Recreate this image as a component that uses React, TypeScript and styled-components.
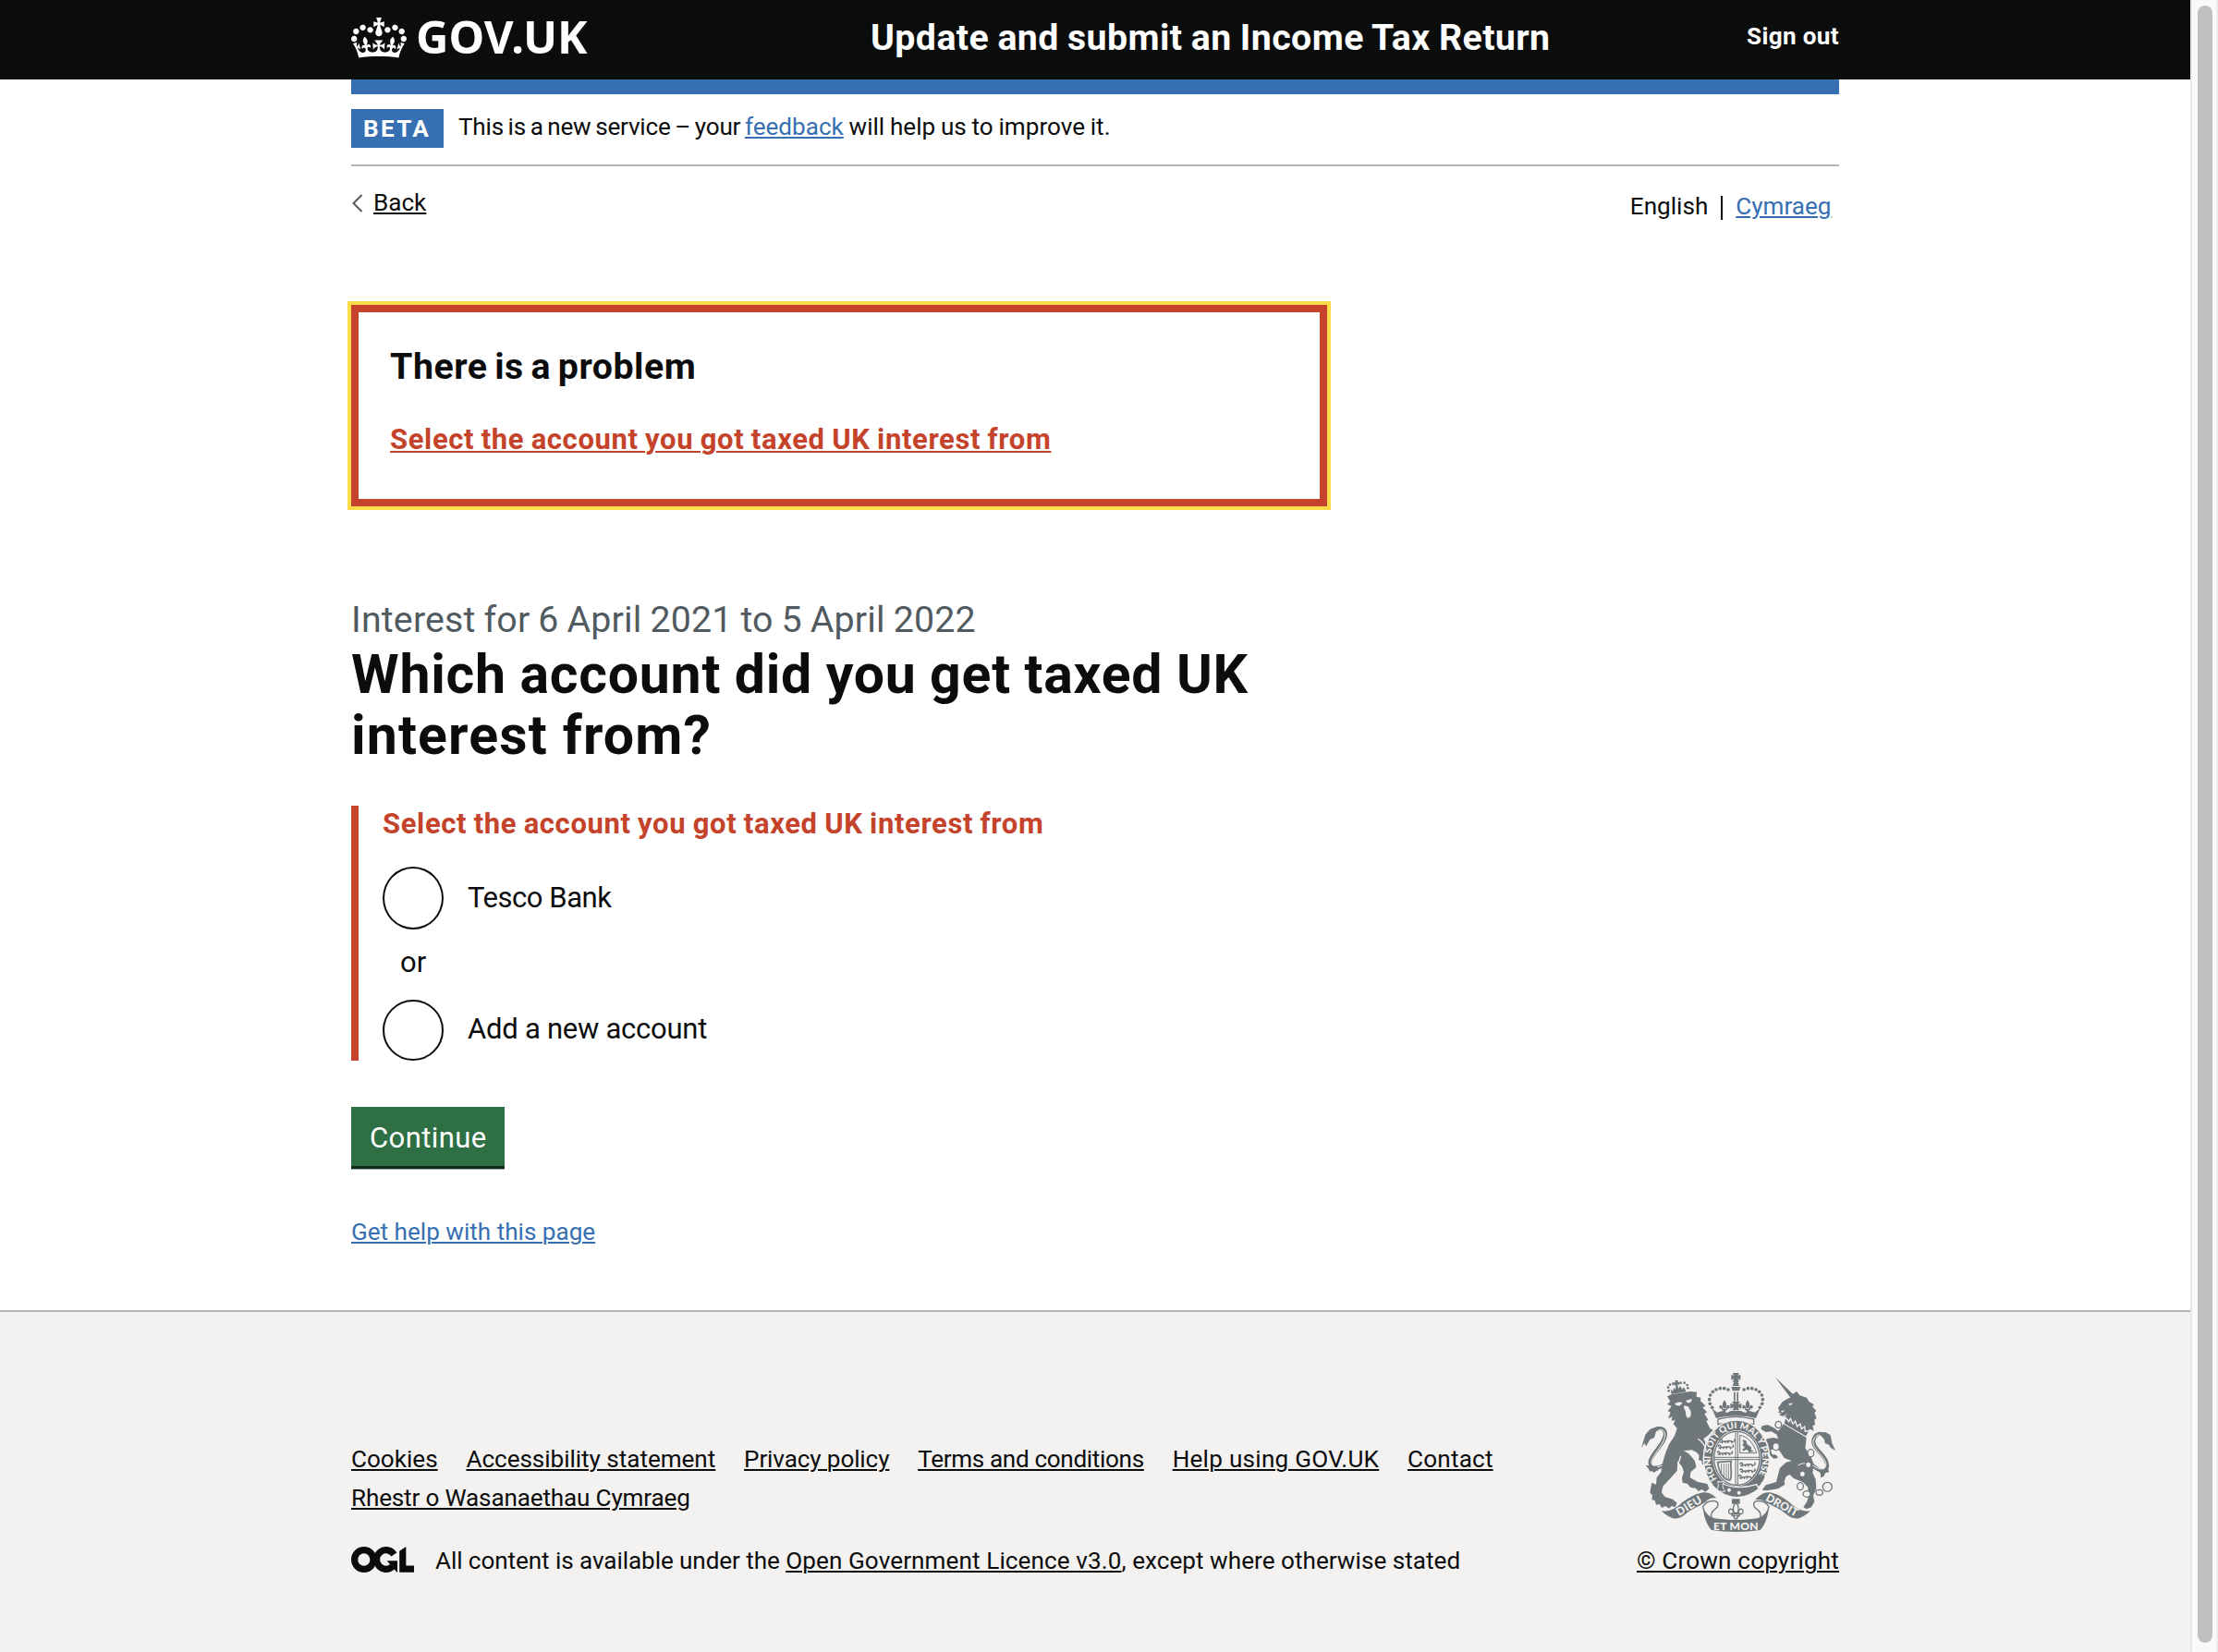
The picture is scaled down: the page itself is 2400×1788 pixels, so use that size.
import React from "react";
import styled, { createGlobalStyle } from "styled-components";

const ink = "#0b0c0c";
const blue = "#366fb2";
const red = "#c4432a";
const grey = "#b1b4b6";
const canvas = "#f3f2f1";
const crestGrey = "#6f777b";

const GlobalStyle = createGlobalStyle`
  html, body { margin: 0; padding: 0; background: #fff; }
  *, *::before, *::after { box-sizing: border-box; }
  body {
    color: ${ink};
    font-family: Roboto, "Liberation Sans", sans-serif;
    -webkit-font-smoothing: antialiased;
  }
  h1, h2, p, ul { margin: 0; padding: 0; }
`;

const Window = styled.div`
  display: flex;
  height: 1788px;
  overflow: hidden;
`;

const Page = styled.div`
  display: flex;
  flex-direction: column;
  width: 2370px;
`;

const ScrollTrack = styled.div`
  width: 30px;
  padding: 6px 4px 10px 6px;
  background: #fafafa;
  border-left: 2px solid #e8e8e8;
  border-right: 2px solid #ededed;
`;

const ScrollThumb = styled.div`
  width: 16px;
  height: 100%;
  border-radius: 8px;
  background: #c1c1c1;
`;

const Container = styled.div`
  width: 1610px;
  margin: 0 auto;
`;

const Header = styled.header`
  height: 86px;
  background: ${ink};
  color: #fff;
`;

const HeaderGrid = styled(Container)`
  display: grid;
  grid-template-columns: 562px 1fr auto;
  align-items: start;
`;

const Logo = styled.div`
  display: flex;
  align-items: flex-start;
  padding-top: 13px;
  svg { margin: 6px 10px 0 0; display: block; }
`;

const LogoText = styled.span`
  font-family: "Noto Sans", sans-serif;
  font-size: 49px;
  line-height: 52px;
  font-weight: 700;
`;

const ServiceName = styled.div`
  padding-top: 17px;
  font-size: 39.3px;
  line-height: 48px;
  font-weight: 700;
  letter-spacing: 0.42px;
  word-spacing: -1px;
  white-space: nowrap;
`;

const SignOut = styled.div`
  padding-top: 24px;
  font-size: 26.1px;
  line-height: 30px;
  font-weight: 700;
  letter-spacing: 0.35px;
`;

const BlueBar = styled(Container)`
  height: 16px;
  background: ${blue};
`;

const Text = styled.span<{ $ls?: number; $ws?: number }>`
  letter-spacing: ${p => p.$ls ?? 0}px;
  word-spacing: ${p => p.$ws ?? 0}px;
  white-space: pre;
`;

const Link = styled.a<{ $ls?: number; $ws?: number; $color?: string }>`
  color: ${p => p.$color ?? ink};
  letter-spacing: ${p => p.$ls ?? 0}px;
  word-spacing: ${p => p.$ws ?? 0}px;
  text-decoration: underline;
  text-decoration-thickness: 2px;
  text-underline-offset: 2px;
  white-space: nowrap;
`;

const PhaseBanner = styled(Container)`
  display: flex;
  align-items: flex-start;
  height: 78px;
  padding-top: 16px;
  border-bottom: 2px solid ${grey};
`;

const PhaseTag = styled.strong`
  width: 100px;
  margin-right: 16px;
  padding-left: 13px;
  background: ${blue};
  color: #fff;
  font-size: 26.1px;
  line-height: 42px;
  font-weight: 700;
  letter-spacing: 2.3px;
`;

const PhaseText = styled.p`
  font-size: 26.1px;
  line-height: 38px;
`;

const TopRow = styled(Container)`
  display: flex;
  justify-content: space-between;
  align-items: flex-start;
  height: 150px;
  padding: 23px 8.5px 0 0;
  font-size: 26.1px;
  line-height: 32px;
`;

const Back = styled.div`
  display: flex;
  svg { margin: 7px 11px 0 1px; display: block; }
`;

const Languages = styled.div`
  display: flex;
  margin-top: 4px;
`;

const LanguageDivider = styled.span`
  width: 2px;
  height: 26px;
  margin: 5px 14px 0;
  background: ${ink};
`;

const Main = styled(Container)`
  display: flex;
  flex-direction: column;
  align-items: flex-start;
`;

const ErrorSummary = styled.section`
  width: 1056px;
  height: 218px;
  padding: 38px 34px;
  border: 8px solid ${red};
  outline: 4px solid #fbdd4b;
`;

const ErrorHeading = styled.h2`
  margin-bottom: 37px;
  font-size: 39.3px;
  line-height: 42px;
  font-weight: 700;
  letter-spacing: 0.53px;
  word-spacing: -2.6px;
`;

const ErrorLink = styled.div`
  font-size: 31px;
  line-height: 41px;
  font-weight: 700;
`;

const Caption = styled.p`
  margin-top: 102px;
  color: #505a5f;
  font-size: 39.3px;
  line-height: 42px;
  letter-spacing: 0.2px;
  word-spacing: -1.1px;
`;

const Title = styled.h1`
  margin-top: 5px;
  font-size: 59px;
  line-height: 66px;
  font-weight: 700;
`;

const FormGroup = styled.div`
  height: 276px;
  margin-top: 43px;
  padding-left: 26px;
  border-left: 8px solid ${red};
`;

const FieldError = styled.p`
  margin-bottom: 27px;
  color: ${red};
  font-size: 31px;
  line-height: 39px;
  font-weight: 700;
  letter-spacing: 0.62px;
  word-spacing: -0.8px;
`;

const Radio = styled.label<{ $h: number; $drop: number }>`
  display: flex;
  align-items: flex-start;
  height: ${p => p.$h}px;
  font-size: 31px;
  line-height: 41px;
  &::before {
    content: "";
    width: 66px;
    height: 100%;
    margin-right: 26px;
    border: 2px solid ${ink};
    border-radius: 50%;
  }
  > span { margin-top: ${p => p.$drop}px; }
`;

const Or = styled.div`
  margin: 15px 0 20px 19px;
  font-size: 31px;
  line-height: 41px;
`;

const Continue = styled.button`
  width: 166px;
  height: 64px;
  margin: 50px 0 55px;
  padding: 13px 0 10px 20px;
  border: 0;
  background: #2f6f44;
  box-shadow: 0 3px 0 #0f2c1a, 0 4px 0 #9db0a4;
  color: #fff;
  font-family: inherit;
  font-size: 31px;
  line-height: 41px;
  letter-spacing: 0.4px;
  text-align: left;
`;

const Help = styled.div`
  font-size: 26.1px;
  line-height: 32px;
`;

const Footer = styled.footer`
  flex: 1;
  margin-top: 69px;
  padding-top: 66px;
  border-top: 2px solid ${grey};
  background: ${canvas};
  font-size: 26.1px;
  line-height: 42px;
`;

const FooterMeta = styled(Container)`
  display: flex;
  justify-content: space-between;
  align-items: flex-end;
`;

const FooterLinks = styled.nav`
  display: flex;
  flex-wrap: wrap;
  column-gap: 30.8px;
  width: 1290px;
  margin-bottom: 26px;
`;

const Licence = styled.div`
  display: flex;
  align-items: flex-start;
  svg { margin: 6px 23px 0 0; display: block; }
`;

const Crown = styled.div`
  display: flex;
  flex-direction: column;
  svg { margin: 0 0 10px 5px; display: block; }
`;

const CrownIcon = () => (
  <svg width="60" height="44" viewBox="0 0 132 97" preserveAspectRatio="none" fill="#fff">
    <path fillRule="evenodd" d="M25 30.2c3.5 1.5 7.7-.2 9.1-3.7 1.5-3.6-.2-7.8-3.9-9.2-3.6-1.4-7.6.3-9.1 3.9-1.4 3.5.3 7.5 3.9 9zM9 39.5c3.6 1.5 7.8-.2 9.2-3.7 1.5-3.6-.2-7.8-3.9-9.1-3.6-1.5-7.6.2-9.1 3.8-1.4 3.5.3 7.5 3.8 9zM4.4 57.2c3.5 1.5 7.7-.2 9.1-3.8 1.5-3.6-.2-7.7-3.9-9.1-3.5-1.5-7.6.3-9.1 3.8-1.4 3.5.3 7.6 3.9 9.1zm38.3-21.4c3.5 1.5 7.7-.2 9.1-3.8 1.5-3.6-.2-7.7-3.9-9.1-3.6-1.5-7.6.3-9.1 3.8-1.3 3.6.4 7.7 3.9 9.1zm64.4-5.6c-3.6 1.5-7.8-.2-9.1-3.7-1.5-3.6.2-7.8 3.8-9.2 3.6-1.4 7.7.3 9.2 3.9 1.3 3.5-.4 7.5-3.9 9zm15.9 9.3c-3.6 1.5-7.7-.2-9.1-3.7-1.5-3.6.2-7.8 3.7-9.1 3.6-1.5 7.7.2 9.2 3.8 1.5 3.5-.3 7.5-3.8 9zm4.7 17.7c-3.6 1.5-7.8-.2-9.2-3.8-1.5-3.6.2-7.7 3.9-9.1 3.6-1.5 7.7.3 9.2 3.8 1.3 3.5-.4 7.6-3.9 9.1zM89.3 35.8c-3.6 1.5-7.8-.2-9.2-3.8-1.4-3.6.2-7.7 3.9-9.1 3.6-1.5 7.7.3 9.2 3.8 1.4 3.6-.3 7.7-3.9 9.1zM69.7 17.7l8.9 4.7V9.3l-8.9 2.8c-.2-.3-.5-.6-.9-.9L72.4 0H59.6l3.5 11.2c-.3.3-.6.5-.9.9l-8.8-2.8v13.1l8.8-4.7c.3.3.6.7.9.9l-5 15.4v.1c-.2.8-.4 1.6-.4 2.4 0 4.1 3.1 7.5 7 8.1h.2c.3 0 .7.1 1 .1.4 0 .7 0 1-.1h.2c4-.6 7.1-4.1 7.1-8.1 0-.8-.1-1.7-.4-2.4V34l-5.1-15.4c.4-.2.7-.6 1-.9zM66 92.8c16.9 0 32.8 1.1 47.1 3.2 4-16.9 8.9-26.7 14-33.5l-9.6-3.4c1 4.9 1.1 7.2 0 10.2-1.5-1.4-3-4.3-4.2-8.7L108.6 76c2.8-2 5-3.2 7.5-3.3-4.4 9.4-10 11.9-13.6 11.2-4.3-.8-6.3-4.6-5.6-7.9 1-4.7 5.7-5.9 8-.5 4.3-8.7-3-11.4-7.6-8.8 7.1-7.2 7.9-13.5 2.1-21.1-8 6.1-8.1 12.3-4.5 20.8-4.7-5.4-12.1-2.5-9.5 6.2 3.4-5.2 7.9-2 7.2 3.1-.6 4.3-6.4 7.8-13.5 7.2-10.3-.9-10.9-8-11.2-13.8 2.5-.5 7.1 1.8 11 7.3L80.2 60c-4.1 4.4-8 5.3-12.3 5.4 1.4-4.4 8-11.6 8-11.6H55.5s6.4 7.2 7.9 11.6c-4.2-.1-8-1-12.3-5.4l1.4 16.4c3.9-5.5 8.5-7.7 10.9-7.3-.3 5.8-.9 12.8-11.1 13.8-7.2.6-12.9-2.9-13.5-7.2-.7-5 3.8-8.3 7.1-3.1 2.7-8.7-4.6-11.6-9.4-6.2 3.7-8.5 3.6-14.7-4.6-20.8-5.8 7.6-5 13.9 2.2 21.1-4.7-2.6-11.9.1-7.7 8.8 2.3-5.5 7.1-4.2 8.1.5.7 3.3-1.3 7.1-5.7 7.9-3.5.7-9-1.8-13.5-11.2 2.5.1 4.7 1.3 7.5 3.3l-4.7-15.4c-1.2 4.4-2.7 7.2-4.3 8.7-1.1-3-.9-5.3 0-10.2l-9.5 3.4c5 6.9 9.9 16.7 14 33.5 14.8-2.1 30.8-3.2 47.7-3.2z" />
  </svg>
);

const OglIcon = () => (
  <svg width="68" height="28" viewBox="0 0 483 196" preserveAspectRatio="none" fill="none" stroke={ink} strokeWidth="51">
    <circle cx="98" cy="98" r="72.3" />
    <path d="M329 59A72.3 72.3 0 1 0 318 150" />
    <path fill={ink} stroke="none" d="M275 106h80v88h-3l-53-60z" />
    <path fill={ink} stroke="none" d="M421.500 142.800V0l-50.700 32.400v161.100h112.400v-50.700z" />
  </svg>
);

const crownBeads = [
  [338, 160], [331, 148], [329, 134], [332, 120], [340, 109], [351, 102], [364, 98], [377, 98], [390, 102],
];

const lionCrownBeads = [
  [197, 106], [195, 95], [201, 86], [211, 83], [236, 80], [248, 80], [257, 87], [259, 97],
];

const Fleur = ({ x, y, s = 1 }: { x: number; y: number; s?: number }) => (
  <g transform={`translate(${x} ${y}) scale(${s})`}>
    <path d="M0-19C8-9 8-2 4 7h-8C-8-2-8-9 0-19zM5 9C6-5 18-6 17 5c-1 5-6 5-8 3 0 4-2 7-5 8zM-5 9C-6-5-18-6-17 5c1 5 6 5 8 3 0 4 2 7 5 8z" />
    <path d="M-9 9H9v4H-9zM-4 13h8l-1 8h-6z" />
  </g>
);

const Passant = ({ x, y }: { x: number; y: number }) => (
  <path
    transform={`translate(${x} ${y})`}
    fill="none"
    strokeWidth="4.500"
    d="M0 4c2-6 8-5 8 0s8 2 18 1 14-2 16 4M10 5l-3 7M17 6l2 6M29 5l-2 7M38 6l4 6M44 7c6 0 7-6 3-8M2 8l5 2"
  />
);

const CrestIcon = () => (
  <svg width="210" height="172" viewBox="108 48 630 516" preserveAspectRatio="none" fill={crestGrey}>
    <defs>
      <path id="garter" d="M354 392.500A84 99 0 1 1 480 392.500" />
    </defs>

    {/* royal crown */}
    <path d="M404 48h22l-5 9 9-4v18l-9-4 5 10h-22l5-10-9 4V53l9 4zM409 77h12l5 13h-22z" />
    <path d="M400 93h30l-4 13h-22z" />
    <path d="M408 110h5v30h-5zM418 110h5v30h-5zM402 141h26l-6 10 11-5v18l-11-5 4 10h-22l4-10-11 5v-18l11 5z" />
    {crownBeads.map(([x, y]) => (
      <g key={`${x}-${y}`}>
        <circle cx={x} cy={y} r="5.500" />
        <circle cx={831 - x} cy={y} r="5.500" />
      </g>
    ))}
    <Fleur x={378} y={155} />
    <Fleur x={453} y={155} />
    <path d="M337 163l17 13 18-5 14 6 13-6h32l14 6 14-6 17 5 18-13-14 32c-35-10-94-10-129 0z" />
    <path d="M357 198c36-10 80-10 116 0v17c-38-9-78-9-116 0z" fill={canvas} stroke={crestGrey} strokeWidth="4" />

    {/* lion */}
    <path d="M186 345C160 362 132 358 137 334C145 305 188 275 186 243C183 226 166 224 150 234" fill="none" stroke={crestGrey} strokeWidth="12" />
    <path d="M180 348C160 356 139 354 141 334C149 307 188 275 185 244C181 231 168 228 156 236" fill="none" stroke={canvas} strokeWidth="3" />
    <path d="M108 292L121 248L137 230L160 222L175 224L156 238L150 258L136 264L124 286L118 276ZM122 347L150 351L160 350L158 360L166 362L148 371L140 365L136 370L132 360Z" />
    <path d="M192 124L206 118L268 108L288 110L287 125L301 128L300 139L317 155L307 160L321 175L313 181L325 200L319 204L331 228L341 233L326 250L310 262L322 285L336 312L338 346L326 352L316 340L306 346L304 334L294 330L296 316L288 306L272 298L246 301L262 310L282 334L286 354L268 370L266 388L292 402L322 408L328 424L316 434L304 426L294 432L284 422L268 420L258 408L242 404L240 388L246 370L240 352L226 334L224 366L200 392L178 416L174 436L184 450L210 458L224 470L218 484L206 480L198 488L186 480L174 486L168 474L156 476L152 462L142 460L144 446L136 436L142 404L156 410L158 388L172 370L178 336L188 304L198 280L216 252L224 228L212 214L218 200L206 204L208 190L195 196L203 176L194 172L206 156L192 150L202 140Z" />
    <path d="M216 148c8-5 16-8 26-4l-8 10c-8 2-14 0-18-6zM252 138l20-6c0 10-6 14-14 13zM246 154l14 3 8 14c4 16-3 26-11 22-8-8-1-20-11-30z" fill={canvas} />
    <path d="M292 262c16 8 26 30 30 50M236 318l-8 24" fill="none" stroke={canvas} strokeWidth="4" />
    {lionCrownBeads.map(([x, y]) => (
      <circle key={`${x}-${y}`} cx={x} cy={y} r="4" />
    ))}
    <path d="M217 72h11l-2 7 6-2v10l-6-2 2 14 8-9 4 12 6-8 8 15-48 8-3-16 8 6 2-11 6 6 1-15-6 2V77l6 2z" />

    {/* unicorn */}
    <path d="M541 60L600 116L610 110L604 126L592 128Z" />
    <path d="M597 125L612 107L622 121L645 128L652 141L668 150L664 158L676 170L670 178L677 194L670 200L672 216L664 220L668 236L655 230L648 238L578 196L570 192L584 180L568 188L556 186L562 178L552 178L556 170L552 162L566 142L582 132Z" />
    <path d="M584 149l15-4-6 9zM560 172l14-3-8 7z" fill={canvas} />
    <path d="M570 213L575 191L587 206L592 196L600 214L608 204L614 222L624 213L628 230L638 222L640 238L654 236L643 256Z" stroke={canvas} strokeWidth="4" />
    <path d="M569 214L644 258L642 276L640 292L658 318L668 346L664 372L674 394L676 424L666 446L670 466L660 484L644 490L634 484L646 466L652 444L648 418L632 402L602 390L590 378L578 384L572 400L574 410L552 424L516 430L500 428L512 412L546 402L552 378L558 356L578 338L596 334L572 324L556 300L540 294L528 298L532 312L546 314L552 324L538 326L520 310L512 288L506 272L516 262L536 258L552 262L548 248L530 238L512 240L496 230L500 220L518 216L538 226L552 236L560 228Z" />
    <path d="M616 348c14-8 30-10 44 0" fill="none" stroke={canvas} strokeWidth="3" />
    <path d="M660 344C690 375 718 370 710 340C704 312 658 290 668 262C674 244 692 240 704 252" fill="none" stroke={crestGrey} strokeWidth="12" />
    <path d="M664 348C690 366 711 364 707 340C700 314 656 290 668 264C673 249 689 245 698 253" fill="none" stroke={canvas} strokeWidth="3" />
    <path d="M684 243L706 240L722 250L727 276L738 300L722 290L718 282L704 276L702 264ZM684 366L714 360L718 370L706 372L700 384L690 388L690 376Z" />
    <g fill={canvas} stroke={crestGrey} strokeWidth="4">
      <ellipse cx="553" cy="216" rx="10" ry="11" />
      <ellipse cx="545" cy="287" rx="11" ry="12" />
      <ellipse cx="658" cy="308" rx="10" ry="12" />
      <ellipse cx="650" cy="346" rx="9" ry="10" />
      <ellipse cx="631" cy="376" rx="9" ry="10" />
      <ellipse cx="624" cy="416" rx="10" ry="12" />
      <ellipse cx="645" cy="441" rx="12" ry="10" />
      <ellipse cx="686" cy="436" rx="11" ry="9" />
      <circle cx="712" cy="418" r="15" />
    </g>

    {/* garter and shield */}
    <ellipse cx="417" cy="327" rx="107" ry="126" stroke={canvas} strokeWidth="5" />
    <ellipse cx="418" cy="325" rx="78" ry="91" fill={canvas} />
    <ellipse cx="418" cy="325" rx="74" ry="87" fill="none" stroke={crestGrey} strokeWidth="4" />
    <text fill={canvas} fontFamily="Lato, sans-serif" fontWeight="900" fontSize="29">
      <textPath href="#garter" textLength="410" lengthAdjust="spacingAndGlyphs">HONI SOIT QUI MAL Y PENSE</textPath>
    </text>
    <path d="M414 238v176M421 238v176M344 322h148M344 329h148" stroke={crestGrey} strokeWidth="3" />
    <g stroke={crestGrey}>
      <Passant x={362} y={264} />
      <Passant x={357} y={283} />
      <Passant x={354} y={303} />
      <Passant x={428} y={340} />
      <Passant x={428} y={360} />
      <Passant x={424} y={380} />
    </g>
    <path d="M428 250c22 4 44 22 54 58h-54z" fill="none" stroke={crestGrey} strokeWidth="3" />
    <path d="M436 264l12 4 4 12 14 10-2 8 10 4-16 4-8-10-12 6-2-6 8-6-8-8 4-6z" />
    <path d="M356 338l44-4c-6 18 6 38-4 62-18 0-36-20-40-58z" fill="none" stroke={crestGrey} strokeWidth="5" />
    <path d="M368 342v32M376 342v42M384 342v48M391 342v50" stroke={crestGrey} strokeWidth="2.500" />
    <path d="M362 402c34 20 74 22 120 8l8 14c-40 34-90 36-128 10z" stroke={canvas} strokeWidth="4" />
    <circle cx="393" cy="428" r="6" fill={canvas} />
    <circle cx="425" cy="437" r="6" fill={canvas} />
    <path d="M356 400c8 4 14 0 22 2-10 8-6 20 2 30-12 4-22 0-26-8 6-4 4-16 2-24z" stroke={canvas} strokeWidth="3" />

    {/* fleur-de-lis and motto scroll */}
    <path d="M402 457h26v16h-6l-7-6-7 6h-6z" />
    <g fill={canvas} stroke={crestGrey} strokeWidth="3">
      <Fleur x={415} y={493} s={1.35} />
    </g>
    <path d="M174 496c24 2 40-6 58-20 22-18 46-34 76-40 16-2 30 4 44 18-16-2-26 2-34 12-22 16-44 22-64 38-16 14-32 20-46 15-16-6-26-14-34-23z" />
    <path d="M656 496c-24 2-40-6-58-20-22-18-42-34-72-40-20-2-34 8-48 24 14-4 28 2 38 10 22 10 40 18 60 34 16 14 32 20 46 15 16-6 26-14 34-23z" />
    <path d="M308 482c8-14 24-20 40-18 12 4 12 16 2 24-12 8-18 20-14 32-14-8-26-22-28-38zM522 482c-8-14-24-20-40-18-12 4-12 16-2 24 12 8 18 20 14 32 14-8 26-22 28-38z" fill={canvas} stroke={crestGrey} strokeWidth="4" />
    <path d="M308 484c6 18 18 32 38 36 44 7 94 7 138 0 20-4 32-18 38-36-2 28-12 58-28 74-50 8-108 8-158 0-16-16-26-46-28-74z" />
    <g fill={canvas} fontFamily="Lato, sans-serif" fontWeight="900" fontSize="36" textAnchor="middle">
      <text transform="translate(269 490) rotate(-31)" textLength="90">DIEU</text>
      <text transform="translate(559 488) rotate(29)" textLength="114">DROIT</text>
      <text x="415" y="557" textLength="146">ET MON</text>
    </g>
  </svg>
);

const footerLinks: [string, number][] = [
  ["Cookies", 0],
  ["Accessibility statement", -0.04],
  ["Privacy policy", -0.12],
  ["Terms and conditions", -0.33],
  ["Help using GOV.UK", 0.27],
  ["Contact", 0.2],
  ["Rhestr o Wasanaethau Cymraeg", -0.16],
];

export default function App() {
  return (
    <>
      <GlobalStyle />
      <Window>
        <Page>
          <Header>
            <HeaderGrid>
              <Logo>
                <CrownIcon />
                <LogoText>GOV.UK</LogoText>
              </Logo>
              <ServiceName>Update and submit an Income Tax Return</ServiceName>
              <SignOut>Sign out</SignOut>
            </HeaderGrid>
          </Header>
          <BlueBar />
          <PhaseBanner>
            <PhaseTag>BETA</PhaseTag>
            <PhaseText>
              <Text $ls={-0.21} $ws={-1.6}>{"This is a new service – your "}</Text>
              <Link $color={blue}>feedback</Link>
              <Text $ws={-0.7}>{" will help us to improve it."}</Text>
            </PhaseText>
          </PhaseBanner>
          <TopRow>
            <Back>
              <svg width="12" height="20" viewBox="0 0 12 20" fill="none" stroke="#505a5f" strokeWidth="2">
                <path d="M10.500 1L1.500 10l9 9" />
              </svg>
              <Link>Back</Link>
            </Back>
            <Languages>
              <Text>English</Text>
              <LanguageDivider />
              <Link $color={blue}>Cymraeg</Link>
            </Languages>
          </TopRow>
          <Main as="main">
            <ErrorSummary>
              <ErrorHeading>There is a problem</ErrorHeading>
              <ErrorLink>
                <Link $color={red} $ls={0.62} $ws={-0.8}>Select the account you got taxed UK interest from</Link>
              </ErrorLink>
            </ErrorSummary>
            <Caption>Interest for 6 April 2021 to 5 April 2022</Caption>
            <Title>
              <Text $ls={0.75} $ws={-0.8}>Which account did you get taxed UK</Text>
              <br />
              <Text $ls={1.15}>interest from?</Text>
            </Title>
            <FormGroup>
              <FieldError>Select the account you got taxed UK interest from</FieldError>
              <Radio $h={68} $drop={13}>
                <Text $ls={-0.45}>Tesco Bank</Text>
              </Radio>
              <Or>or</Or>
              <Radio $h={66} $drop={11}>
                <Text $ls={-0.25}>Add a new account</Text>
              </Radio>
            </FormGroup>
            <Continue>Continue</Continue>
            <Help>
              <Link $color={blue}>Get help with this page</Link>
            </Help>
          </Main>
          <Footer>
            <FooterMeta>
              <div>
                <FooterLinks>
                  {footerLinks.map(([label, spacing]) => (
                    <Link key={label} $ls={spacing}>{label}</Link>
                  ))}
                </FooterLinks>
                <Licence>
                  <OglIcon />
                  <div>
                    <Text $ls={-0.08}>{"All content is available under the "}</Text>
                    <Link $ls={0.1}>Open Government Licence v3.0</Link>
                    <Text $ls={0.03}>, except where otherwise stated</Text>
                  </div>
                </Licence>
              </div>
              <Crown>
                <CrestIcon />
                <Link $ls={0.17}>© Crown copyright</Link>
              </Crown>
            </FooterMeta>
          </Footer>
        </Page>
        <ScrollTrack>
          <ScrollThumb />
        </ScrollTrack>
      </Window>
    </>
  );
}
